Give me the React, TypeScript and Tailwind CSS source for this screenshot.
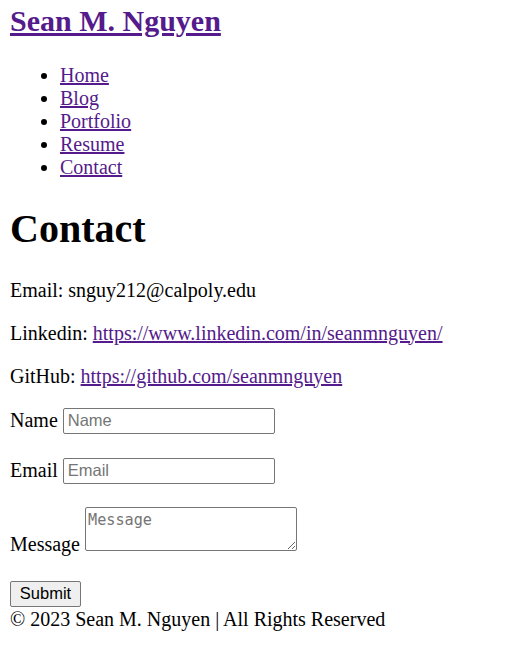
export default function App() {
  return (
    <div className="min-h-screen bg-white px-[10px] pt-[4px] font-['Liberation_Serif','Times_New_Roman',serif] text-[20px] leading-[23px] text-black">
      <h2 className="mb-[25px] text-[30px] font-bold leading-[34.5px]">
        <a href="#" className="text-[#551a8b] underline">
          Sean M. Nguyen
        </a>
      </h2>
      <ul className="mb-[27px] list-disc pl-[50px]">
        <li>
          <a href="#" className="text-[#551a8b] underline">Home</a>
        </li>
        <li>
          <a href="#" className="text-[#551a8b] underline">Blog</a>
        </li>
        <li>
          <a href="#" className="text-[#551a8b] underline">Portfolio</a>
        </li>
        <li>
          <a href="#" className="text-[#551a8b] underline">Resume</a>
        </li>
        <li>
          <a href="#" className="text-[#551a8b] underline">Contact</a>
        </li>
      </ul>
      <h1 className="mb-[27px] text-[40px] font-bold leading-[46px]">Contact</h1>
      <p className="mb-[20px]">Email: snguy212@calpoly.edu</p>
      <p className="mb-[20px]">
        Linkedin:{" "}
        <a href="#" className="text-[#551a8b] underline">
          https://www.linkedin.com/in/seanmnguyen/
        </a>
      </p>
      <p>
        GitHub:{" "}
        <a href="#" className="text-[#551a8b] underline">
          https://github.com/seanmnguyen
        </a>
      </p>
      <form onSubmit={(e) => e.preventDefault()}>
        <div className="mt-[20px]">
          <label>Name</label>{" "}
          <input
            type="text"
            placeholder="Name"
            className="h-[26px] w-[212px] rounded-[2px] border border-[#767676] px-[4px] font-['Liberation_Sans',Arial,sans-serif] text-[16.5px] text-black placeholder:text-[#757575]"
          />
        </div>
        <div className="mt-[24px]">
          <label>Email</label>{" "}
          <input
            type="text"
            placeholder="Email"
            className="h-[26px] w-[212px] rounded-[2px] border border-[#767676] px-[4px] font-['Liberation_Sans',Arial,sans-serif] text-[16.5px] text-black placeholder:text-[#757575]"
          />
        </div>
        <div className="mt-[23px]">
          <label>Message</label>{" "}
          <textarea
            placeholder="Message"
            className="h-[44px] w-[212px] rounded-[2px] border border-[#767676] px-[2px] pt-[3px] font-['DejaVu_Sans_Mono','Liberation_Mono',monospace] text-[15.2px] leading-[19px] text-black placeholder:text-[#757575]"
          />
        </div>
        <button
          type="submit"
          className="mt-[25px] block h-[26px] w-[71px] rounded-[2px] border border-[#767676] bg-[#efefef] font-['Liberation_Sans',Arial,sans-serif] text-[16.5px] leading-none text-black"
        >
          Submit
        </button>
      </form>
      <p className="mt-[1px]">© 2023 Sean M. Nguyen | All Rights Reserved</p>
    </div>
  );
}
